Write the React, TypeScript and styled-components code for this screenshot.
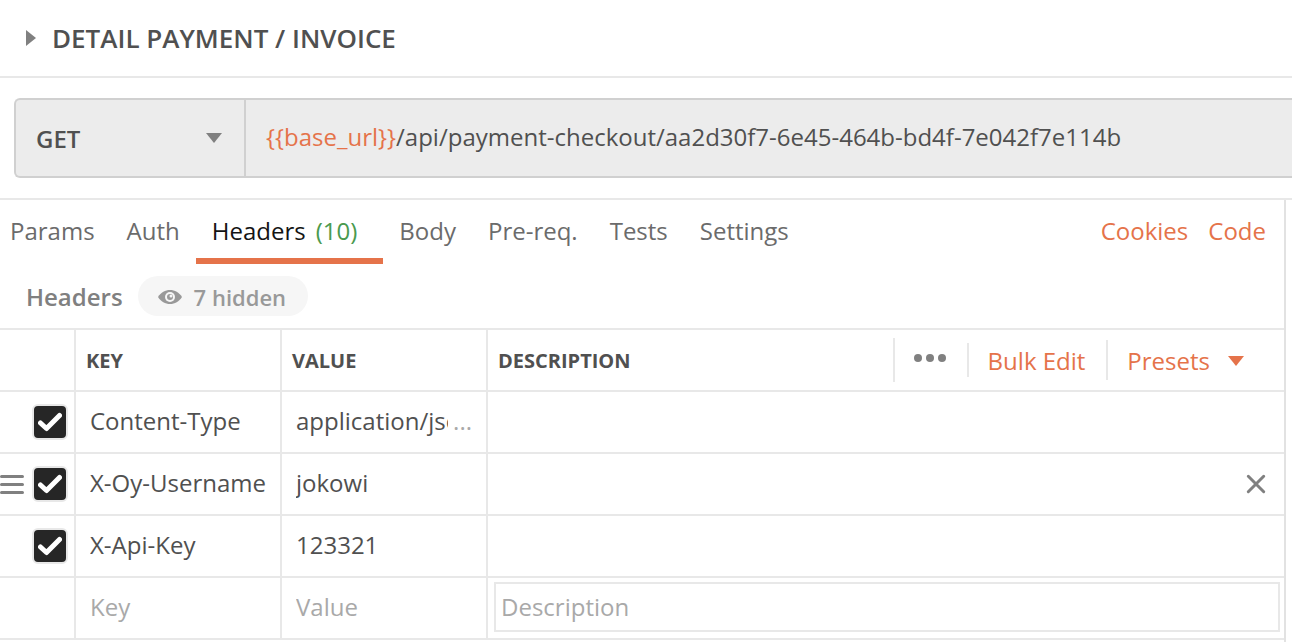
import React, { useState } from "react";
import styled, { createGlobalStyle } from "styled-components";

const color = {
  orange: "#e5734a",
  green: "#4a9a4e",
  text: "#505050",
  muted: "#808080",
  faint: "#a9a9a9",
  line: "#e8e8e8",
};

const GlobalStyle = createGlobalStyle`
  * { box-sizing: border-box; }
  body {
    margin: 0;
    background: #fff;
    color: ${color.text};
    font-family: "Open Sans", "Noto Sans", sans-serif;
    font-size: 24px;
    line-height: 32px;
    overflow-x: hidden;
  }
  button, input, select { font: inherit; color: inherit; }
  button { border: 0; padding: 0; background: none; cursor: pointer; }
  svg { display: block; flex: none; }
`;

const Page = styled.div`
  display: flex;
  flex-direction: column;
  min-height: 100vh;
`;

const TitleBar = styled.header`
  display: flex;
  align-items: center;
  gap: 16px;
  height: 78px;
  padding-left: 26px;
  border-bottom: 2px solid ${color.line};
`;

const Title = styled.h1`
  margin: 0;
  font-size: 26px;
  font-weight: 600;
  line-height: 36px;
`;

const RequestBar = styled.form`
  display: flex;
  height: 80px;
  margin: 20px 0 20px 14px;
  border: 2px solid #d0d0d0;
  border-right: 0;
  border-radius: 6px 0 0 6px;
  background: #ececec;
`;

const MethodBox = styled.label`
  display: grid;
  flex: none;
  align-items: center;
  width: 230px;
  padding: 0 22px 0 20px;
  border-right: 2px solid #d0d0d0;

  > * { grid-area: 1 / 1; }
  > svg { justify-self: end; pointer-events: none; }
`;

const MethodSelect = styled.select`
  width: 100%;
  height: 100%;
  padding: 2px 0 0;
  border: 0;
  background: transparent;
  font-weight: 600;
  appearance: none;
`;

const UrlField = styled.label`
  display: flex;
  flex: 1;
  align-items: center;
  min-width: 0;
  padding: 0 0 2px 20px;
`;

const Variable = styled.span`
  color: ${color.orange};
`;

const PlainInput = styled.input`
  display: block;
  flex: 1;
  min-width: 0;
  width: 100%;
  height: 32px;
  padding: 0;
  border: 0;
  outline: 0;
  background: transparent;

  &::placeholder { color: ${color.faint}; opacity: 1; }
`;

const Panel = styled.main`
  display: flex;
  flex: 1;
  border-top: 2px solid ${color.line};
  padding-right: 6px;
`;

const PanelBody = styled.div`
  flex: 1;
  min-width: 0;
  border-right: 2px solid #e2e2e2;
`;

const TabBar = styled.div`
  display: flex;
  justify-content: space-between;
  padding-right: 18px;
`;

const Tabs = styled.nav`
  display: flex;
  margin-left: -6px;
`;

const Tab = styled.button<{ $active?: boolean }>`
  display: flex;
  gap: 10px;
  height: 64px;
  padding: 15px ${(p) => (p.$active ? 26 : 16)}px 0 16px;
  border-bottom: 6px solid ${(p) => (p.$active ? color.orange : "transparent")};
  color: ${(p) => (p.$active ? "#141414" : "#6b6b6b")};
`;

const Count = styled.span`
  color: ${color.green};
`;

const TabLinks = styled.div`
  display: flex;
  gap: 20px;
  padding-top: 15px;
`;

const TextLink = styled.a`
  color: ${color.orange};
  text-decoration: none;
`;

const SectionBar = styled.div`
  display: flex;
  align-items: center;
  gap: 15px;
  padding: 12px 0 12px 26px;
`;

const SectionTitle = styled.h2`
  margin: 0;
  padding-top: 2px;
  color: ${color.muted};
  font-size: 24px;
  font-weight: 600;
`;

const HiddenPill = styled.button`
  display: flex;
  align-items: center;
  gap: 12px;
  height: 40px;
  padding: 2px 22px 0 20px;
  border-radius: 20px;
  background: #f6f6f6;
  color: #999;
  font-size: 22px;
  font-weight: 600;
`;

const HeaderTable = styled.table`
  width: 100%;
  table-layout: fixed;
  border-collapse: separate;
  border-spacing: 0;
  border-top: 2px solid ${color.line};

  th, td {
    height: 62px;
    padding: 0;
    border-right: 2px solid ${color.line};
    border-bottom: 2px solid ${color.line};
    text-align: left;
  }
  th:last-child, td:last-child { border-right: 0; }
`;

const Col = styled.col<{ $width?: number }>`
  width: ${(p) => (p.$width ? `${p.$width}px` : "auto")};
`;

const HeadCell = styled.div`
  display: flex;
  align-items: center;
  padding-left: 10px;
`;

const HeadLabel = styled.span`
  padding-top: 2px;
  font-size: 20px;
  font-weight: 700;
`;

const Actions = styled.div`
  display: flex;
  align-items: center;
  margin-left: auto;
  color: ${color.orange};
  font-weight: 400;
`;

const Action = styled.button<{ $rule: number; $end: number }>`
  display: flex;
  align-items: center;
  gap: 18px;
  height: ${(p) => p.$rule}px;
  padding: 2px ${(p) => p.$end}px 0 19px;
  border-left: 2px solid ${color.line};
`;

const ToggleCell = styled.div`
  display: flex;
  align-items: center;
  justify-content: space-between;
  padding-right: 6px;
`;

const CheckBox = styled.label`
  display: grid;
  width: 36px;
  height: 36px;
  margin-left: auto;

  > * { grid-area: 1 / 1; place-self: center; }
  > svg { pointer-events: none; }
`;

const CheckInput = styled.input`
  width: 36px;
  height: 36px;
  margin: 0;
  border: 2px solid ${color.line};
  border-radius: 6px;
  background: #fff;
  appearance: none;

  &:checked { background: #262626; }
  &:not(:checked) + svg { visibility: hidden; }
`;

const Field = styled.div`
  display: flex;
  align-items: center;
  gap: 5px;
  padding: 0 14px 2px 14px;
`;

const Ellipsis = styled.span`
  color: ${color.faint};
`;

const DescriptionField = styled(Field)`
  padding: 0 18px 0 14px;
`;

const BoxedInput = styled(PlainInput)`
  width: calc(100% - 10px);
  height: 50px;
  margin: 0 4px 2px 6px;
  padding: 0 5px 2px;
  border: 2px solid ${color.line};
`;

const Caret = ({ fill }: { fill: string }) => (
  <svg width="16" height="10" viewBox="0 0 16 10" aria-hidden="true">
    <path d="M0 0h16L8 10z" fill={fill} />
  </svg>
);

const EyeIcon = () => (
  <svg width="24" height="14" viewBox="0 0 24 14" aria-hidden="true">
    <path d="M0 7C3 2.300 7.200 0 12 0s9 2.300 12 7c-3 4.700-7.200 7-12 7S3 11.700 0 7z" fill="#999" />
    <circle cx="12" cy="7" r="5" fill="#f6f6f6" />
    <circle cx="12" cy="7" r="3" fill="#999" />
    <circle cx="13" cy="6" r="1.500" fill="#f6f6f6" />
  </svg>
);

const CheckIcon = () => (
  <svg width="24" height="20" viewBox="0 0 24 20" aria-hidden="true">
    <path d="M2.500 11L8.500 16.500L21.500 3.500" fill="none" stroke="#fff" strokeWidth="5" strokeLinecap="round" strokeLinejoin="round" />
  </svg>
);

const DragIcon = () => (
  <svg width="24" height="20" viewBox="0 0 24 20" aria-hidden="true">
    <path d="M1.500 2.500h21M1.500 10.500h21M1.500 18.500h21" stroke={color.muted} strokeWidth="3" strokeLinecap="round" />
  </svg>
);

const CloseIcon = () => (
  <svg width="20" height="20" viewBox="0 0 20 20" aria-hidden="true">
    <path d="M2.300 2.300l15.400 15.400M17.700 2.300L2.300 17.700" stroke={color.muted} strokeWidth="3" strokeLinecap="round" />
  </svg>
);

const DotsIcon = () => (
  <svg width="32" height="16" viewBox="0 0 32 16" aria-hidden="true">
    <circle cx="4" cy="5" r="4" fill={color.muted} />
    <circle cx="16" cy="5" r="4" fill={color.muted} />
    <circle cx="28" cy="5" r="4" fill={color.muted} />
  </svg>
);

const tabs = ["Params", "Auth", "Headers", "Body", "Pre-req.", "Tests", "Settings"];

const rows = [
  { key: "Content-Type", value: "application/json", clipped: true },
  { key: "X-Oy-Username", value: "jokowi", hovered: true },
  { key: "X-Api-Key", value: "123321" },
];

export default function App() {
  const [active, setActive] = useState("Headers");
  return (
    <Page>
      <GlobalStyle />
      <TitleBar>
        <svg width="10" height="16" viewBox="0 0 10 16" aria-hidden="true">
          <path d="M0 0l10 8-10 8z" fill={color.muted} />
        </svg>
        <Title>DETAIL PAYMENT / INVOICE</Title>
      </TitleBar>
      <RequestBar>
        <MethodBox>
          <MethodSelect aria-label="Method" defaultValue="GET">
            <option>GET</option>
          </MethodSelect>
          <Caret fill={color.muted} />
        </MethodBox>
        <UrlField>
          <Variable>{"{{base_url}}"}</Variable>
          <PlainInput aria-label="Request URL" defaultValue="/api/payment-checkout/aa2d30f7-6e45-464b-bd4f-7e042f7e114b" />
        </UrlField>
      </RequestBar>
      <Panel>
        <PanelBody>
          <TabBar>
            <Tabs>
              {tabs.map((name) => (
                <Tab key={name} type="button" $active={name === active} onClick={() => setActive(name)}>
                  {name}
                  {name === "Headers" && <Count>(10)</Count>}
                </Tab>
              ))}
            </Tabs>
            <TabLinks>
              <TextLink href="#cookies">Cookies</TextLink>
              <TextLink href="#code">Code</TextLink>
            </TabLinks>
          </TabBar>
          <SectionBar>
            <SectionTitle>Headers</SectionTitle>
            <HiddenPill type="button">
              <EyeIcon />
              7 hidden
            </HiddenPill>
          </SectionBar>
          <HeaderTable>
            <colgroup>
              <Col $width={76} />
              <Col $width={206} />
              <Col $width={206} />
              <Col />
            </colgroup>
            <thead>
              <tr>
                <th aria-label="Enabled" />
                <th><HeadCell><HeadLabel>KEY</HeadLabel></HeadCell></th>
                <th><HeadCell><HeadLabel>VALUE</HeadLabel></HeadCell></th>
                <th>
                  <HeadCell>
                    <HeadLabel>DESCRIPTION</HeadLabel>
                    <Actions>
                      <Action type="button" aria-label="Columns" $rule={44} $end={21}><DotsIcon /></Action>
                      <Action type="button" $rule={34} $end={21}>Bulk Edit</Action>
                      <Action type="button" $rule={40} $end={40}>
                        Presets
                        <Caret fill={color.orange} />
                      </Action>
                    </Actions>
                  </HeadCell>
                </th>
              </tr>
            </thead>
            <tbody>
              {rows.map((row) => (
                <tr key={row.key}>
                  <td>
                    <ToggleCell>
                      {row.hovered && <DragIcon />}
                      <CheckBox>
                        <CheckInput type="checkbox" defaultChecked aria-label={`Enable ${row.key}`} />
                        <CheckIcon />
                      </CheckBox>
                    </ToggleCell>
                  </td>
                  <td><Field><PlainInput aria-label="Key" defaultValue={row.key} /></Field></td>
                  <td>
                    <Field>
                      <PlainInput aria-label="Value" defaultValue={row.value} />
                      {row.clipped && <Ellipsis>...</Ellipsis>}
                    </Field>
                  </td>
                  <td>
                    <DescriptionField>
                      <PlainInput aria-label="Description" />
                      {row.hovered && <button type="button" aria-label="Remove header"><CloseIcon /></button>}
                    </DescriptionField>
                  </td>
                </tr>
              ))}
              <tr>
                <td />
                <td><Field><PlainInput aria-label="New key" placeholder="Key" /></Field></td>
                <td><Field><PlainInput aria-label="New value" placeholder="Value" /></Field></td>
                <td><BoxedInput aria-label="New description" placeholder="Description" /></td>
              </tr>
            </tbody>
          </HeaderTable>
        </PanelBody>
      </Panel>
    </Page>
  );
}
